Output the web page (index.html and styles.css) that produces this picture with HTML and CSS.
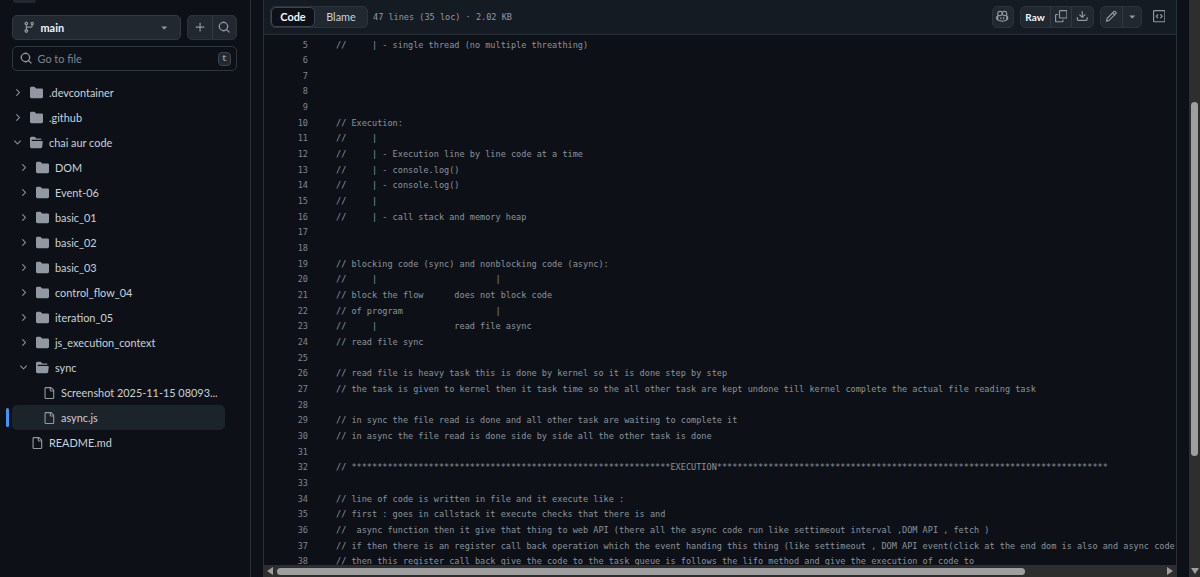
FILE: index.html
```html
<!DOCTYPE html>
<html lang="en-US">
<head>
    <title>async.js</title>
    <link rel="stylesheet" href="styles.css">
</head>
<body>

    <svg class="sprites" width="0" height="0">
        <symbol id="i-branch" viewBox="0 0 16 16"><path d="M9.5 3.25a2.25 2.25 0 1 1 3 2.122V6A2.5 2.5 0 0 1 10 8.5H6a1 1 0 0 0-1 1v1.128a2.251 2.251 0 1 1-1.5 0V5.372a2.25 2.25 0 1 1 1.5 0v1.836A2.493 2.493 0 0 1 6 7h4a1 1 0 0 0 1-1v-.628A2.25 2.25 0 0 1 9.5 3.25Zm-6 0a.75.75 0 1 0 1.5 0 .75.75 0 0 0-1.5 0Zm8.25-.75a.75.75 0 1 0 0 1.5.75.75 0 0 0 0-1.5ZM4.25 12a.75.75 0 1 0 0 1.5.75.75 0 0 0 0-1.5Z"/></symbol>
        <symbol id="i-plus" viewBox="0 0 16 16"><path d="M7.75 2a.75.75 0 0 1 .75.75V7h4.25a.75.75 0 0 1 0 1.5H8.5v4.25a.75.75 0 0 1-1.5 0V8.5H2.75a.75.75 0 0 1 0-1.5H7V2.75A.75.75 0 0 1 7.75 2Z"/></symbol>
        <symbol id="i-search" viewBox="0 0 16 16"><path d="M10.68 11.74a6 6 0 0 1-7.922-8.982 6 6 0 0 1 8.982 7.922l3.04 3.04a.749.749 0 0 1-.326 1.275.749.749 0 0 1-.734-.215ZM11.5 7a4.499 4.499 0 1 0-8.997 0A4.499 4.499 0 0 0 11.5 7Z"/></symbol>
        <symbol id="i-right" viewBox="0 0 16 16"><path d="M6.22 3.22a.75.75 0 0 1 1.06 0l4.25 4.25a.75.75 0 0 1 0 1.06l-4.25 4.25a.751.751 0 0 1-1.042-.018.751.751 0 0 1-.018-1.042L9.94 8 6.22 4.28a.75.75 0 0 1 0-1.06Z"/></symbol>
        <symbol id="i-down" viewBox="0 0 16 16"><path d="M12.78 5.22a.749.749 0 0 1 0 1.06l-4.25 4.25a.749.749 0 0 1-1.06 0L3.22 6.28a.749.749 0 1 1 1.06-1.06L8 8.939l3.72-3.719a.749.749 0 0 1 1.06 0Z"/></symbol>
        <symbol id="i-folder" viewBox="0 0 16 16"><path d="M1.75 1A1.75 1.75 0 0 0 0 2.75v10.5C0 14.216.784 15 1.75 15h12.5A1.75 1.75 0 0 0 16 13.25v-8.5A1.75 1.75 0 0 0 14.25 3H7.5a.25.25 0 0 1-.2-.1l-.9-1.2C6.07 1.26 5.55 1 5 1H1.75Z"/></symbol>
        <symbol id="i-folder-open" viewBox="0 0 16 16"><path d="M.513 1.513A1.75 1.75 0 0 1 1.75 1h3.5c.55 0 1.07.26 1.4.7l.9 1.2a.25.25 0 0 0 .2.1H13a1 1 0 0 1 1 1v.5H2.75a.75.75 0 0 0 0 1.5h11.978a1 1 0 0 1 .994 1.117L15 13.25A1.75 1.75 0 0 1 13.25 15H1.75A1.75 1.75 0 0 1 0 13.25V2.75c0-.464.184-.91.513-1.237Z"/></symbol>
        <symbol id="i-file" viewBox="0 0 16 16"><path d="M2 1.75C2 .784 2.784 0 3.75 0h6.586c.464 0 .909.184 1.237.513l2.914 2.914c.329.328.513.773.513 1.237v9.586A1.75 1.75 0 0 1 13.25 16h-9.5A1.75 1.75 0 0 1 2 14.25Zm1.75-.25a.25.25 0 0 0-.25.25v12.5c0 .138.112.25.25.25h9.5a.25.25 0 0 0 .25-.25V6h-2.75A1.75 1.75 0 0 1 9 4.25V1.5Zm6.75.062V4.25c0 .138.112.25.25.25h2.688l-.011-.013-2.914-2.914-.013-.011Z"/></symbol>
        <symbol id="i-copilot" viewBox="0 0 16 16"><path d="M7.998 15.035c-4.562 0-7.873-2.914-7.998-3.749V9.338c.085-.628.677-1.686 1.588-2.065.013-.07.024-.143.036-.218.029-.183.06-.384.126-.612-.201-.508-.254-1.084-.254-1.656 0-.87.128-1.769.693-2.484.579-.733 1.494-1.124 2.724-1.261 1.206-.134 2.262.034 2.944.765.05.053.096.108.139.165.044-.057.094-.112.143-.165.682-.731 1.738-.899 2.944-.765 1.23.137 2.145.528 2.724 1.261.566.715.693 1.614.693 2.484 0 .572-.053 1.148-.254 1.656.066.228.098.429.126.612.012.076.024.148.037.218.924.385 1.522 1.471 1.591 2.095v1.872c0 .766-3.351 3.795-8.002 3.795Zm0-1.485c2.28 0 4.584-1.11 5.002-1.433V7.862l-.023-.116c-.49.21-1.075.291-1.727.291-1.146 0-2.059-.327-2.71-.991A3.222 3.222 0 0 1 8 6.303a3.24 3.24 0 0 1-.544.743c-.65.664-1.563.991-2.71.991-.652 0-1.236-.081-1.727-.291l-.023.116v4.255c.419.323 2.722 1.433 5.002 1.433ZM6.762 2.83c-.193-.206-.637-.413-1.682-.297-1.019.113-1.479.404-1.713.7-.247.312-.369.789-.369 1.554 0 .793.129 1.171.308 1.371.162.181.519.379 1.442.379.853 0 1.339-.235 1.638-.54.315-.322.527-.827.617-1.553.117-.935-.037-1.395-.241-1.614Zm4.155-.297c-1.044-.116-1.488.091-1.681.297-.204.219-.359.679-.242 1.614.091.726.303 1.231.618 1.553.299.305.784.54 1.638.54.922 0 1.28-.198 1.442-.379.179-.2.308-.578.308-1.371 0-.765-.123-1.242-.37-1.554-.233-.296-.693-.587-1.713-.7Z"/><path d="M6.25 9.037a.75.75 0 0 1 .75.75v1.501a.75.75 0 0 1-1.5 0V9.787a.75.75 0 0 1 .75-.75Zm4.25.75v1.501a.75.75 0 0 1-1.5 0V9.787a.75.75 0 0 1 1.5 0Z"/></symbol>
        <symbol id="i-copy" viewBox="0 0 16 16"><path d="M0 6.75C0 5.784.784 5 1.75 5h1.5a.75.75 0 0 1 0 1.5h-1.5a.25.25 0 0 0-.25.25v7.5c0 .138.112.25.25.25h7.5a.25.25 0 0 0 .25-.25v-1.5a.75.75 0 0 1 1.5 0v1.5A1.75 1.75 0 0 1 9.25 16h-7.5A1.75 1.75 0 0 1 0 14.25Z"/><path d="M5 1.75C5 .784 5.784 0 6.75 0h7.5C15.216 0 16 .784 16 1.75v7.5A1.75 1.75 0 0 1 14.25 11h-7.5A1.75 1.75 0 0 1 5 9.25Zm1.75-.25a.25.25 0 0 0-.25.25v7.5c0 .138.112.25.25.25h7.5a.25.25 0 0 0 .25-.25v-7.5a.25.25 0 0 0-.25-.25Z"/></symbol>
        <symbol id="i-download" viewBox="0 0 16 16"><path d="M2.75 14A1.75 1.75 0 0 1 1 12.25v-2.5a.75.75 0 0 1 1.5 0v2.5c0 .138.112.25.25.25h10.5a.25.25 0 0 0 .25-.25v-2.5a.75.75 0 0 1 1.5 0v2.5A1.75 1.75 0 0 1 13.25 14Z"/><path d="M7.25 7.689V2a.75.75 0 0 1 1.5 0v5.689l1.97-1.969a.749.749 0 1 1 1.06 1.06l-3.25 3.25a.749.749 0 0 1-1.06 0L4.22 6.78a.749.749 0 1 1 1.06-1.06l1.97 1.969Z"/></symbol>
        <symbol id="i-pencil" viewBox="0 0 16 16"><path d="M11.013 1.427a1.75 1.75 0 0 1 2.474 0l1.086 1.086a1.75 1.75 0 0 1 0 2.474l-8.61 8.61c-.21.21-.47.364-.756.445l-3.251.93a.75.75 0 0 1-.927-.928l.929-3.25c.081-.286.235-.547.445-.758l8.61-8.61Zm.176 4.823L9.75 4.81l-6.286 6.287a.253.253 0 0 0-.064.108l-.558 1.953 1.953-.558a.253.253 0 0 0 .108-.064Zm1.238-3.763a.25.25 0 0 0-.354 0L10.811 3.75l1.439 1.44 1.263-1.263a.25.25 0 0 0 0-.354Z"/></symbol>
        <symbol id="i-caret" viewBox="0 0 16 16"><path d="m4.427 7.427 3.396 3.396a.25.25 0 0 0 .354 0l3.396-3.396A.25.25 0 0 0 11.396 7H4.604a.25.25 0 0 0-.177.427Z"/></symbol>
        <symbol id="i-code-square" viewBox="0 0 16 16"><path d="M0 1.75C0 .784.784 0 1.75 0h12.5C15.216 0 16 .784 16 1.75v12.5A1.75 1.75 0 0 1 14.25 16H1.75A1.75 1.75 0 0 1 0 14.25Zm1.75-.25a.25.25 0 0 0-.25.25v12.5c0 .138.112.25.25.25h12.5a.25.25 0 0 0 .25-.25V1.75a.25.25 0 0 0-.25-.25Zm7.47 3.97a.75.75 0 0 1 1.06 0l2 2a.75.75 0 0 1 0 1.06l-2 2a.749.749 0 0 1-1.275-.326.749.749 0 0 1 .215-.734L10.69 8 9.22 6.53a.75.75 0 0 1 0-1.06ZM6.78 6.53 5.31 8l1.47 1.47a.749.749 0 0 1-.326 1.275.749.749 0 0 1-.734-.215l-2-2a.75.75 0 0 1 0-1.06l2-2a.751.751 0 0 1 1.042.018.751.751 0 0 1 .018 1.042Z"/></symbol>
    </svg>

    <div class="page">

        <aside class="sidebar">
            <div class="sidebar__stub"></div>
            <div class="sidebar__controls">
                <div class="branch">
                    <svg class="icon"><use href="#i-branch"/></svg>
                    <span class="branch__name">main</span>
                    <svg class="icon branch__caret"><use href="#i-caret"/></svg>
                </div>
                <div class="btn-group btn-group--side">
                    <div class="btn-group__item"><svg class="icon"><use href="#i-plus"/></svg></div>
                    <div class="btn-group__item"><svg class="icon"><use href="#i-search"/></svg></div>
                </div>
            </div>
            <div class="filter">
                <svg class="icon"><use href="#i-search"/></svg>
                <span class="filter__text">Go to file</span>
                <kbd class="filter__key">t</kbd>
            </div>

            <ul class="tree">
                <li class="tree__row tree__row--l0"><svg class="icon tree__chev"><use href="#i-right"/></svg><svg class="icon tree__folder"><use href="#i-folder"/></svg>.devcontainer</li>
                <li class="tree__row tree__row--l0"><svg class="icon tree__chev"><use href="#i-right"/></svg><svg class="icon tree__folder"><use href="#i-folder"/></svg>.github</li>
                <li class="tree__row tree__row--l0"><svg class="icon tree__chev"><use href="#i-down"/></svg><svg class="icon tree__folder"><use href="#i-folder-open"/></svg>chai aur code</li>
                <li class="tree__row tree__row--l1"><svg class="icon tree__chev"><use href="#i-right"/></svg><svg class="icon tree__folder"><use href="#i-folder"/></svg>DOM</li>
                <li class="tree__row tree__row--l1"><svg class="icon tree__chev"><use href="#i-right"/></svg><svg class="icon tree__folder"><use href="#i-folder"/></svg>Event-06</li>
                <li class="tree__row tree__row--l1"><svg class="icon tree__chev"><use href="#i-right"/></svg><svg class="icon tree__folder"><use href="#i-folder"/></svg>basic_01</li>
                <li class="tree__row tree__row--l1"><svg class="icon tree__chev"><use href="#i-right"/></svg><svg class="icon tree__folder"><use href="#i-folder"/></svg>basic_02</li>
                <li class="tree__row tree__row--l1"><svg class="icon tree__chev"><use href="#i-right"/></svg><svg class="icon tree__folder"><use href="#i-folder"/></svg>basic_03</li>
                <li class="tree__row tree__row--l1"><svg class="icon tree__chev"><use href="#i-right"/></svg><svg class="icon tree__folder"><use href="#i-folder"/></svg>control_flow_04</li>
                <li class="tree__row tree__row--l1"><svg class="icon tree__chev"><use href="#i-right"/></svg><svg class="icon tree__folder"><use href="#i-folder"/></svg>iteration_05</li>
                <li class="tree__row tree__row--l1"><svg class="icon tree__chev"><use href="#i-right"/></svg><svg class="icon tree__folder"><use href="#i-folder"/></svg>js_execution_context</li>
                <li class="tree__row tree__row--l1"><svg class="icon tree__chev"><use href="#i-down"/></svg><svg class="icon tree__folder"><use href="#i-folder-open"/></svg>sync</li>
                <li class="tree__row tree__row--file2"><svg class="icon tree__file"><use href="#i-file"/></svg>Screenshot 2025-11-15 08093...</li>
                <li class="tree__row tree__row--file2 active"><svg class="icon tree__file"><use href="#i-file"/></svg>async.js</li>
                <li class="tree__row tree__row--file0"><svg class="icon tree__file"><use href="#i-file"/></svg>README.md</li>
            </ul>
        </aside>

        <main class="blob">
            <div class="blob__header">
                <div class="switch">
                    <span class="switch__item active">Code</span>
                    <span class="switch__item">Blame</span>
                </div>
                <span class="blob__meta">47 lines (35 loc) · 2.02 KB</span>

                <div class="blob__actions">
                    <div class="btn-single"><svg class="icon"><use href="#i-copilot"/></svg></div>
                    <div class="btn-group">
                        <div class="btn-group__item btn-group__item--raw">Raw</div>
                        <div class="btn-group__item btn-group__item--sq"><svg class="icon"><use href="#i-copy"/></svg></div>
                        <div class="btn-group__item btn-group__item--sq"><svg class="icon"><use href="#i-download"/></svg></div>
                    </div>
                    <div class="btn-group">
                        <div class="btn-group__item btn-group__item--sq"><svg class="icon"><use href="#i-pencil"/></svg></div>
                        <div class="btn-group__item btn-group__item--caret"><svg class="icon"><use href="#i-caret"/></svg></div>
                    </div>
                    <svg class="icon blob__symbols"><use href="#i-code-square"/></svg>
                </div>
            </div>

            <div class="code">
                <div class="line"><span class="line__no">5</span><span class="line__text">//     | - single thread (no multiple threathing)</span></div>
                <div class="line"><span class="line__no">6</span><span class="line__text"></span></div>
                <div class="line"><span class="line__no">7</span><span class="line__text"></span></div>
                <div class="line"><span class="line__no">8</span><span class="line__text"></span></div>
                <div class="line"><span class="line__no">9</span><span class="line__text"></span></div>
                <div class="line"><span class="line__no">10</span><span class="line__text">// Execution:</span></div>
                <div class="line"><span class="line__no">11</span><span class="line__text">//     |</span></div>
                <div class="line"><span class="line__no">12</span><span class="line__text">//     | - Execution line by line code at a time</span></div>
                <div class="line"><span class="line__no">13</span><span class="line__text">//     | - console.log()</span></div>
                <div class="line"><span class="line__no">14</span><span class="line__text">//     | - console.log()</span></div>
                <div class="line"><span class="line__no">15</span><span class="line__text">//     |</span></div>
                <div class="line"><span class="line__no">16</span><span class="line__text">//     | - call stack and memory heap</span></div>
                <div class="line"><span class="line__no">17</span><span class="line__text"></span></div>
                <div class="line"><span class="line__no">18</span><span class="line__text"></span></div>
                <div class="line"><span class="line__no">19</span><span class="line__text">// blocking code (sync) and nonblocking code (async):</span></div>
                <div class="line"><span class="line__no">20</span><span class="line__text">//     |                       |</span></div>
                <div class="line"><span class="line__no">21</span><span class="line__text">// block the flow      does not block code</span></div>
                <div class="line"><span class="line__no">22</span><span class="line__text">// of program                  |</span></div>
                <div class="line"><span class="line__no">23</span><span class="line__text">//     |               read file async</span></div>
                <div class="line"><span class="line__no">24</span><span class="line__text">// read file sync</span></div>
                <div class="line"><span class="line__no">25</span><span class="line__text"></span></div>
                <div class="line"><span class="line__no">26</span><span class="line__text">// read file is heavy task this is done by kernel so it is done step by step</span></div>
                <div class="line"><span class="line__no">27</span><span class="line__text">// the task is given to kernel then it task time so the all other task are kept undone till kernel complete the actual file reading task</span></div>
                <div class="line"><span class="line__no">28</span><span class="line__text"></span></div>
                <div class="line"><span class="line__no">29</span><span class="line__text">// in sync the file read is done and all other task are waiting to complete it</span></div>
                <div class="line"><span class="line__no">30</span><span class="line__text">// in async the file read is done side by side all the other task is done</span></div>
                <div class="line"><span class="line__no">31</span><span class="line__text"></span></div>
                <div class="line"><span class="line__no">32</span><span class="line__text">// **************************************************************EXECUTION****************************************************************************</span></div>
                <div class="line"><span class="line__no">33</span><span class="line__text"></span></div>
                <div class="line"><span class="line__no">34</span><span class="line__text">// line of code is written in file and it execute like :</span></div>
                <div class="line"><span class="line__no">35</span><span class="line__text">// first : goes in callstack it execute checks that there is and</span></div>
                <div class="line"><span class="line__no">36</span><span class="line__text">//  async function then it give that thing to web API (there all the async code run like settimeout interval ,DOM API , fetch )</span></div>
                <div class="line"><span class="line__no">37</span><span class="line__text">// if then there is an register call back operation which the event handing this thing (like settimeout , DOM API event(click at the end dom is also and async code</span></div>
                <div class="line"><span class="line__no">38</span><span class="line__text">// then this register call back give the code to the task queue is follows the lifo method and give the execution of code to</span></div>
            </div>

            <div class="hscroll">
                <span class="hscroll__arrow hscroll__arrow--left"></span>
                <div class="hscroll__track"><div class="hscroll__thumb"></div></div>
                <span class="hscroll__arrow hscroll__arrow--right"></span>
            </div>
        </main>

        <div class="gutter"></div>

        <div class="vscroll">
            <div class="vscroll__thumb"></div>
            <span class="vscroll__arrow"></span>
        </div>

    </div>

</body>
</html>
```

FILE: styles.css
```css
* {
    box-sizing: border-box;
}

html, body {
    height: 100%;
}

body {
    background-color: #0d1117;
    color: #c9d1d9;
    margin: 0;
    padding: 0;
    font-family: Lato, "Open Sans", sans-serif;
    font-size: 10.9px;
    overflow: hidden;
}

.sprites {
    position: absolute;
}

.icon {
    width: 12.5px;
    height: 12.5px;
    fill: currentColor;
    flex: none;
}

.page {
    display: flex;
    height: 577px;
}

/* sidebar */

.sidebar {
    width: 251px;
    flex: none;
    padding: 0 13px 0 12px;
    border-right: 1px solid #2a3038;
}

.sidebar__stub {
    width: 23px;
    height: 3px;
    margin: 0 0 12px 1px;
    background-color: #212830;
    border-radius: 0 0 4px 4px;
}

.sidebar__controls {
    display: flex;
    gap: 6px;
    height: 25px;
}

.branch {
    width: 169px;
    display: flex;
    align-items: center;
    padding: 0 10px 0 10px;
    background-color: #212830;
    border: 1px solid #323942;
    border-radius: 5px;
    color: #9198a1;
}

.branch__name {
    color: #f0f6fc;
    font-weight: 700;
    margin-left: 5px;
}

.branch__caret {
    margin-left: auto;
}

.btn-group {
    display: flex;
    height: 22px;
    border: 1px solid #2d333b;
    border-radius: 5px;
    background-color: #212830;
    color: #9198a1;
}

.btn-group--side {
    width: 50px;
    height: 25px;
}

.btn-group__item {
    flex: 1;
    display: flex;
    align-items: center;
    justify-content: center;
}

.btn-group__item + .btn-group__item {
    border-left: 1px solid #323942;
}

.btn-group__item--raw {
    width: 29px;
    flex: none;
    color: #f0f6fc;
    font-size: 10px;
    font-weight: 700;
}

.btn-group__item--sq {
    width: 21.5px;
    flex: none;
}

.btn-group__item--caret {
    width: 18.5px;
    flex: none;
}

.filter {
    display: flex;
    align-items: center;
    height: 25px;
    margin-top: 6px;
    padding: 0 5px 0 7px;
    border: 1px solid #2f353d;
    border-radius: 5px;
    color: #9198a1;
}

.filter__text {
    margin-left: 5px;
    color: #7d8590;
}

.filter__key {
    margin-left: auto;
    width: 13px;
    height: 14px;
    display: flex;
    align-items: center;
    justify-content: center;
    font-family: "Liberation Mono", monospace;
    font-size: 9px;
    font-weight: bold;
    color: #9198a1;
    background-color: #212830;
    border: 1px solid #3d444d;
    border-radius: 4px;
}

.tree {
    list-style-type: none;
    margin: 9px 0 0;
    padding: 0;
}

.tree__row {
    position: relative;
    display: flex;
    align-items: center;
    height: 25px;
    width: 213px;
    border-radius: 5px;
    white-space: nowrap;
}

.tree__row.active {
    background-color: #1d232b;
}

.tree__row.active::before {
    content: "";
    position: absolute;
    left: -6px;
    top: 3px;
    bottom: 3px;
    width: 3px;
    border-radius: 2px;
    background-color: #4493f8;
}

.tree__chev {
    width: 11px;
    height: 11px;
    margin-right: 7px;
    color: #9198a1;
}

.tree__folder {
    width: 13px;
    height: 13px;
    margin-right: 6px;
    color: #9198a1;
}

.tree__file {
    width: 12px;
    height: 12px;
    margin-right: 6px;
    color: #9198a1;
}

.tree__row--l0 {
    padding-left: 0;
}

.tree__row--l1 {
    padding-left: 6px;
}

.tree__row--file2 {
    padding-left: 31px;
}

.tree__row--file0 {
    padding-left: 19px;
}

/* file view */

.blob {
    width: 914px;
    flex: none;
    margin-left: 12px;
    display: flex;
    flex-direction: column;
    border-left: 1px solid #2a3038;
    border-right: 1px solid #2a3038;
}

.blob__header {
    height: 35px;
    flex: none;
    display: flex;
    align-items: center;
    padding: 0 11px 1px 6px;
    background-color: #151b23;
    border-bottom: 1px solid #2a3038;
}

.switch {
    display: flex;
    width: 98px;
    height: 22px;
    background-color: #212830;
    border: 1px solid #2d333b;
    border-radius: 5px;
}

.switch__item {
    flex: 1;
    display: flex;
    align-items: center;
    justify-content: center;
    border-radius: 5px;
}

.switch__item.active {
    flex: none;
    width: 44px;
    color: #f0f6fc;
    font-weight: 700;
    background-color: #0d1117;
    border: 1px solid #3d444d;
}

.blob__meta,
.line {
    font-family: "DejaVu Sans Mono", monospace;
    font-size: 8.55px;
}

.blob__meta {
    margin-left: 5px;
    color: #9198a1;
}

.blob__actions {
    margin-left: auto;
    display: flex;
    align-items: center;
    gap: 6px;
    color: #9198a1;
}

.btn-single {
    width: 22px;
    height: 22px;
    display: flex;
    align-items: center;
    justify-content: center;
    background-color: #212830;
    border: 1px solid #2d333b;
    border-radius: 5px;
}

.blob__symbols {
    margin-left: 5px;
}

.code {
    flex: 1;
    min-height: 0;
    overflow: hidden;
    padding-top: 2.5px;
}

.line {
    display: flex;
    height: 15.67px;
    line-height: 15.67px;
    white-space: pre;
    color: #8b939c;
}

.line__no {
    width: 44px;
    flex: none;
    text-align: right;
    color: #7d8590;
}

.line__text {
    margin-left: 28px;
}

/* browser scrollbars */

.hscroll {
    height: 12px;
    flex: none;
    display: flex;
    align-items: center;
    background-color: #2e2e2e;
}

.hscroll__track {
    flex: 1;
    padding: 0 139px 0 1px;
}

.hscroll__thumb {
    height: 7px;
    border-radius: 4px;
    background-color: #9f9f9f;
}

.hscroll__arrow {
    width: 0;
    height: 0;
    margin: 0 3px;
    border-top: 4px solid transparent;
    border-bottom: 4px solid transparent;
}

.hscroll__arrow--left {
    border-right: 6px solid #9f9f9f;
}

.hscroll__arrow--right {
    border-left: 6px solid #9f9f9f;
}

.gutter {
    width: 12px;
    flex: none;
}

.vscroll {
    width: 11px;
    flex: none;
    display: flex;
    flex-direction: column;
    align-items: center;
    justify-content: space-between;
    padding: 102px 0 3px;
    background-color: #2e2e2e;
}

.vscroll__thumb {
    width: 7px;
    height: 354px;
    border-radius: 4px;
    background-color: #9f9f9f;
}

.vscroll__arrow {
    width: 0;
    height: 0;
    border-left: 4px solid transparent;
    border-right: 4px solid transparent;
    border-top: 6px solid #9f9f9f;
}
```
